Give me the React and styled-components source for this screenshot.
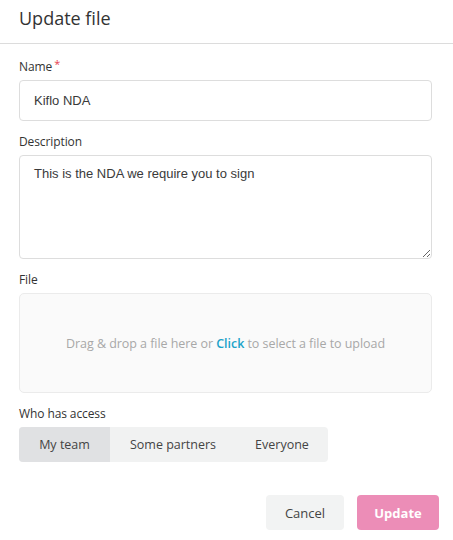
import React, { useState } from 'react';
import styled, { createGlobalStyle } from 'styled-components';

const GlobalStyle = createGlobalStyle`
  html, body {
    margin: 0;
    padding: 0;
    background: #fff;
    font-family: "Open Sans", "Noto Sans", sans-serif;
  }
  * { box-sizing: border-box; }
`;

const Modal = styled.div`
  width: 453px;
  height: 540px;
  background: #fff;
  overflow: hidden;
`;

const Header = styled.div`
  height: 44px;
  padding: 0 19px;
  display: flex;
  align-items: center;
  border-bottom: 1px solid #dcdcdc;
`;

const Title = styled.h2`
  margin: 0;
  font-size: 18px;
  font-weight: 400;
  color: #333;
  padding-bottom: 8px;
`;

const Body = styled.div`
  padding: 11px 21px 0 19px;
  display: flex;
  flex-direction: column;
`;

const Field = styled.div`
  display: flex;
  flex-direction: column;
  margin-bottom: ${p => p.$gap ?? 12}px;
`;

const Label = styled.label`
  font-size: 12px;
  color: #333;
  line-height: 18px;
  margin-bottom: 4px;
  letter-spacing: -0.1px;
`;

const Required = styled.span`
  color: #e8434f;
  margin-left: 2px;
  font-size: 11px;
  vertical-align: 3px;
`;

const Input = styled.input`
  height: 41px;
  border: 1px solid #dddddd;
  border-radius: 4px;
  padding: 0 14px;
  font-family: "Liberation Sans", Arial, sans-serif;
  font-size: 13px;
  color: #3a3a3a;
  outline: none;
`;

const TextArea = styled.textarea`
  height: 104px;
  border: 1px solid #dddddd;
  border-radius: 4px;
  padding: 10px 14px;
  font-family: "Liberation Sans", Arial, sans-serif;
  font-size: 13px;
  color: #3a3a3a;
  outline: none;
  resize: vertical;
`;

const DropZone = styled.div`
  height: 100px;
  border: 1px solid #ebebeb;
  border-radius: 5px;
  background: #fafafa;
  display: flex;
  align-items: center;
  justify-content: center;
  font-size: 12.5px;
  letter-spacing: -0.05px;
  color: #a8a8a8;
`;

const ClickLink = styled.span`
  color: #1ca3c9;
  font-weight: 600;
  cursor: pointer;
`;

const Segmented = styled.div`
  display: flex;
  align-self: flex-start;
  border-radius: 4px;
  overflow: hidden;
  background: #f1f2f2;
`;

const Segment = styled.button`
  height: 35px;
  width: ${p => p.$w}px;
  border: none;
  background: ${p => (p.$active ? '#e0e1e3' : 'transparent')};
  font-family: "Open Sans", "Noto Sans", sans-serif;
  font-size: 12.5px;
  color: #444;
  padding: 0;
  cursor: pointer;
`;

const Footer = styled.div`
  display: flex;
  justify-content: flex-end;
  gap: 13px;
  margin-top: 33px;
  margin-right: -7px;
`;

const Button = styled.button`
  height: 35px;
  border: none;
  border-radius: 4px;
  font-family: "Open Sans", "Noto Sans", sans-serif;
  font-size: 13px;
  padding: 0;
  width: ${p => p.$w}px;
  background: ${p => (p.$primary ? '#ec8db7' : '#f2f3f3')};
  color: ${p => (p.$primary ? '#fff' : '#444')};
  font-weight: ${p => (p.$primary ? 700 : 400)};
  cursor: pointer;
`;

const options = [
  { id: 'team', label: 'My team', w: 91 },
  { id: 'some', label: 'Some partners', w: 126 },
  { id: 'all', label: 'Everyone', w: 92 },
];

export default function App() {
  const [access, setAccess] = useState('team');

  return (
    <Modal>
      <GlobalStyle />
      <Header>
        <Title>Update file</Title>
      </Header>
      <Body>
        <Field>
          <Label>Name<Required>*</Required></Label>
          <Input defaultValue="Kiflo NDA" />
        </Field>
        <Field>
          <Label>Description</Label>
          <TextArea defaultValue="This is the NDA we require you to sign" />
        </Field>
        <Field $gap={12}>
          <Label>File</Label>
          <DropZone>
            Drag &amp; drop a file here or&nbsp;<ClickLink>Click</ClickLink>&nbsp;to select a file to upload
          </DropZone>
        </Field>
        <Field $gap={0}>
          <Label>Who has access</Label>
          <Segmented>
            {options.map(o => (
              <Segment
                key={o.id}
                $w={o.w}
                $active={access === o.id}
                onClick={() => setAccess(o.id)}
              >
                {o.label}
              </Segment>
            ))}
          </Segmented>
        </Field>
        <Footer>
          <Button $w={78}>Cancel</Button>
          <Button $w={82} $primary>Update</Button>
        </Footer>
      </Body>
    </Modal>
  );
}
